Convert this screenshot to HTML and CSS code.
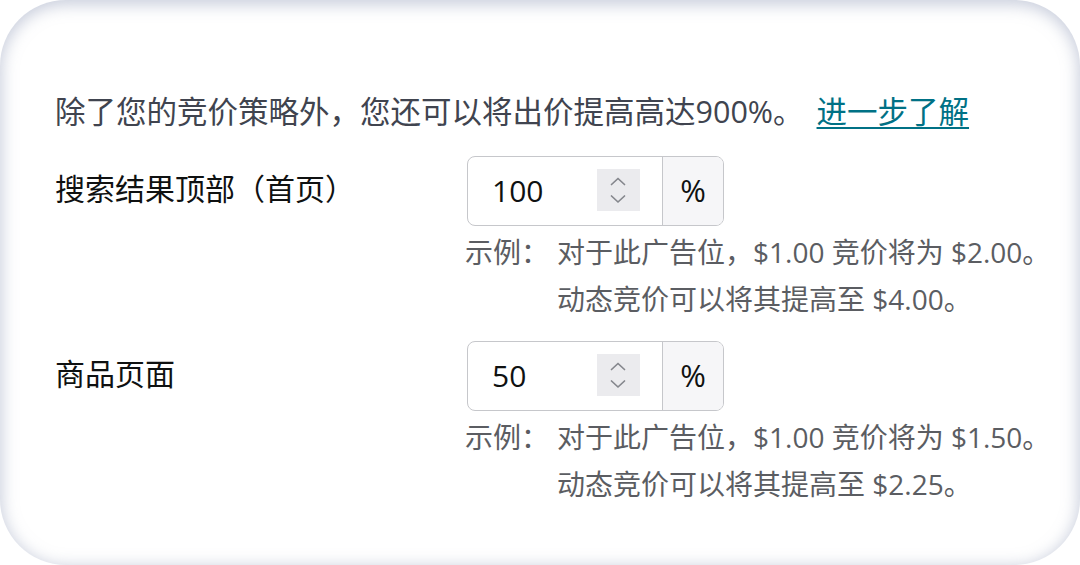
FILE: index.html
```html
<!DOCTYPE html>
<html lang="zh-CN">
<head>
<meta charset="utf-8">
<title>竞价调整</title>
<link rel="stylesheet" href="styles.css">
</head>
<body>
<div class="card">
  <p class="intro">除了您的竞价策略外，您还可以将出价提高高达900%。<a class="link" href="#">进一步了解</a></p>

  <div class="row">
    <div class="label">搜索结果顶部（首页）</div>
    <div class="field">
      <div class="num">
        <span class="value">100</span>
        <span class="spin">
          <svg width="43" height="42" viewBox="0 0 43 42"><path d="M14.5 15.5 L21 9.5 L27.5 15.5" /><path d="M14.5 27 L21 33 L27.5 27" /></svg>
        </span>
      </div>
      <div class="suffix">%</div>
    </div>
    <div class="example">
      <span class="ex-title">示例：</span>
      <div class="ex-lines">
        <div>对于此广告位，$1.00 竞价将为 $2.00。</div>
        <div>动态竞价可以将其提高至 $4.00。</div>
      </div>
    </div>
  </div>

  <div class="row">
    <div class="label">商品页面</div>
    <div class="field">
      <div class="num">
        <span class="value">50</span>
        <span class="spin">
          <svg width="43" height="42" viewBox="0 0 43 42"><path d="M14.5 15.5 L21 9.5 L27.5 15.5" /><path d="M14.5 27 L21 33 L27.5 27" /></svg>
        </span>
      </div>
      <div class="suffix">%</div>
    </div>
    <div class="example">
      <span class="ex-title">示例：</span>
      <div class="ex-lines">
        <div>对于此广告位，$1.00 竞价将为 $1.50。</div>
        <div>动态竞价可以将其提高至 $2.25。</div>
      </div>
    </div>
  </div>
</div>
</body>
</html>
```

FILE: styles.css
```css
html, body {
  margin: 0;
  padding: 0;
  background: #ffffff;
}

body {
  font-family: "Open Sans", "Noto Sans CJK SC", sans-serif;
}

.card {
  width: 1080px;
  height: 565px;
  box-sizing: border-box;
  border-radius: 66px;
  background: #ffffff;
  box-shadow: inset 0 3px 15px 2px rgba(150, 160, 188, 0.5);
  padding: 91px 0 0 55px;
  overflow: hidden;
}

.intro {
  margin: 0 0 25px 0;
  font-size: 30.5px;
  line-height: 40px;
  color: #40444f;
  white-space: nowrap;
}

.link {
  margin-left: 13px;
  color: #007185;
  text-decoration: underline;
  text-underline-offset: 4px;
  text-decoration-thickness: 2px;
}

.row {
  display: grid;
  grid-template-columns: 412px auto;
  align-items: center;
  margin-bottom: 18px;
}

.label {
  font-size: 30px;
  line-height: 40px;
  color: #0f1111;
  margin-top: -4px;
}

.field {
  width: 257px;
  height: 70px;
  box-sizing: border-box;
  border: 1px solid #c6c7cb;
  border-radius: 8px;
  display: flex;
  overflow: hidden;
}

.num {
  flex: 1;
  display: flex;
  align-items: center;
  justify-content: space-between;
  padding-left: 24px;
  padding-right: 22px;
}

.value {
  font-size: 30px;
  color: #0f1111;
  margin-top: -2px;
}

.spin {
  width: 43px;
  height: 42px;
  background: #ebebee;
  display: flex;
  margin-top: -2px;
}

.spin path {
  fill: none;
  stroke: #85878d;
  stroke-width: 1.7;
  stroke-linecap: round;
  stroke-linejoin: round;
}

.suffix {
  width: 61px;
  border-left: 1px solid #c6c7cb;
  background: #f6f6f8;
  display: flex;
  align-items: center;
  justify-content: center;
  font-size: 31px;
  color: #0f1111;
  padding-bottom: 2px;
  box-sizing: border-box;
}

.example {
  grid-column: 2;
  display: flex;
  margin-top: 3px;
  margin-left: -2px;
  font-size: 28px;
  line-height: 47px;
  color: #5b5d62;
  white-space: nowrap;
}

.ex-title {
  width: 92px;
  flex: none;
}
```
